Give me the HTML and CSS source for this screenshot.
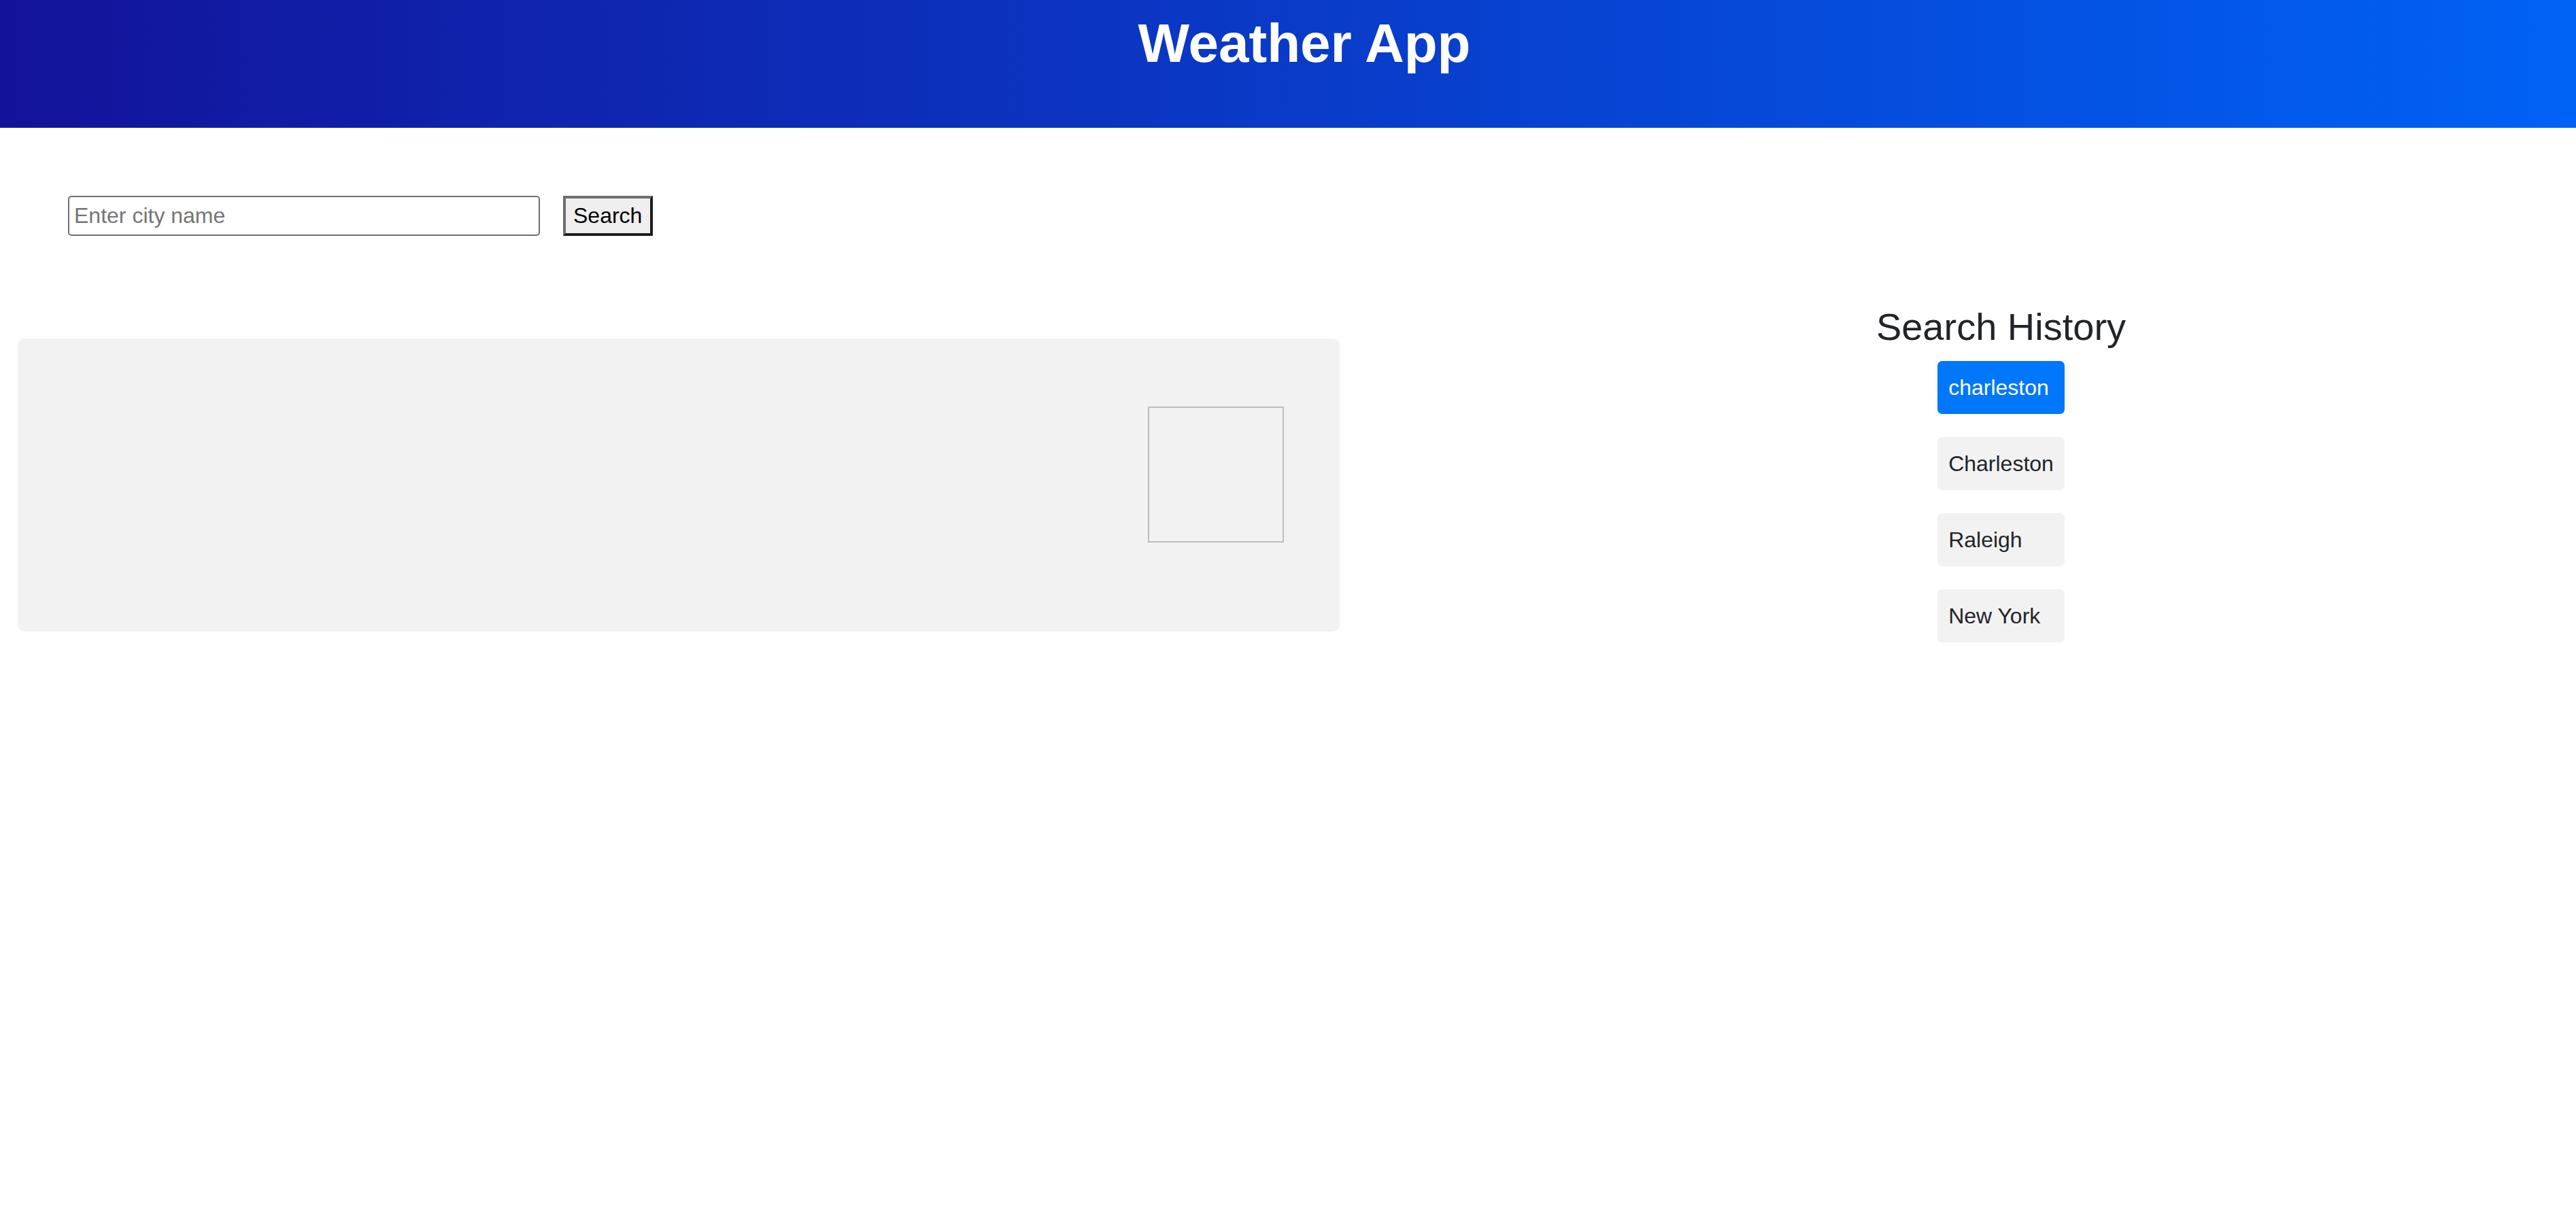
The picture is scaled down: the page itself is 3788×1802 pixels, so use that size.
FILE: index.html
```html
<!DOCTYPE html>
<html lang="en">
<head>
<meta charset="utf-8">
<title>Weather App</title>
<link rel="stylesheet" href="styles.css">
</head>
<body>
<header class="app-header">
  <h1 class="app-title">Weather App</h1>
</header>
<form class="search-form">
  <input class="city-input" type="text" placeholder="Enter city name">
  <button class="search-btn" type="button">Search</button>
</form>
<main class="content">
  <section class="weather-card">
    <div class="weather-icon"></div>
  </section>
  <aside class="history">
    <h2 class="history-title">Search History</h2>
    <div class="history-list">
      <button class="history-item active" type="button">charleston</button>
      <button class="history-item" type="button">Charleston</button>
      <button class="history-item" type="button">Raleigh</button>
      <button class="history-item" type="button">New York</button>
    </div>
  </aside>
</main>
</body>
</html>
```
FILE: styles.css
```css
* { box-sizing: border-box; }

body {
  margin: 0;
  background: #ffffff;
  font-family: "Liberation Sans", Arial, sans-serif;
  color: #212529;
}

.app-header {
  height: 188px;
  padding: 18px 0 0 48px;
  background: linear-gradient(to right, #13139a, #0062f5);
  text-align: center;
}

.app-title {
  margin: 0;
  font-size: 80px;
  font-weight: bold;
  line-height: normal;
  color: #ffffff;
}

.search-form {
  display: flex;
  gap: 34px;
  padding: 100px 0 0 100px;
  margin: 0 0 102px 0;
}

.city-input {
  width: 694px;
  height: 59px;
  padding: 0 7px;
  border: 2px solid #6f6f6f;
  border-radius: 5px;
  font-family: "Liberation Sans", Arial, sans-serif;
  font-size: 32px;
  color: #000;
  background: #fff;
}

.city-input::placeholder { color: #757575; }

.search-btn {
  width: 132px;
  height: 59px;
  padding: 0 11px;
  border: 4px solid;
  border-color: #6e6e6e #1c1c1c #1c1c1c #6e6e6e;
  background: #efefef;
  font-family: "Liberation Sans", Arial, sans-serif;
  font-size: 32px;
  color: #000;
  text-align: left;
}

.content {
  display: flex;
  align-items: flex-start;
  padding-left: 26px;
}

.weather-card {
  width: 1944px;
  height: 431px;
  margin-top: 49px;
  padding: 100px 82px 131px 0;
  display: flex;
  justify-content: flex-end;
  background: #f2f2f2;
  border-radius: 10px;
}

.weather-icon {
  width: 200px;
  height: 200px;
  border: 2px solid #bdbdbd;
}

.history {
  flex: 1;
  margin-left: 127px;
  display: flex;
  flex-direction: column;
  align-items: center;
}

.history-title {
  margin: 0;
  font-size: 56px;
  font-weight: normal;
  line-height: 64px;
  color: #212529;
}

.history-list {
  margin-top: 18px;
  display: flex;
  flex-direction: column;
  gap: 34px;
}

.history-item {
  height: 78px;
  padding: 0 16px;
  border: none;
  border-radius: 7px;
  background: #f2f2f2;
  font-family: "Liberation Sans", Arial, sans-serif;
  font-size: 32px;
  line-height: 37px;
  color: #212529;
  text-align: left;
}

.history-item.active {
  background: #0177fb;
  color: #ffffff;
}
```
